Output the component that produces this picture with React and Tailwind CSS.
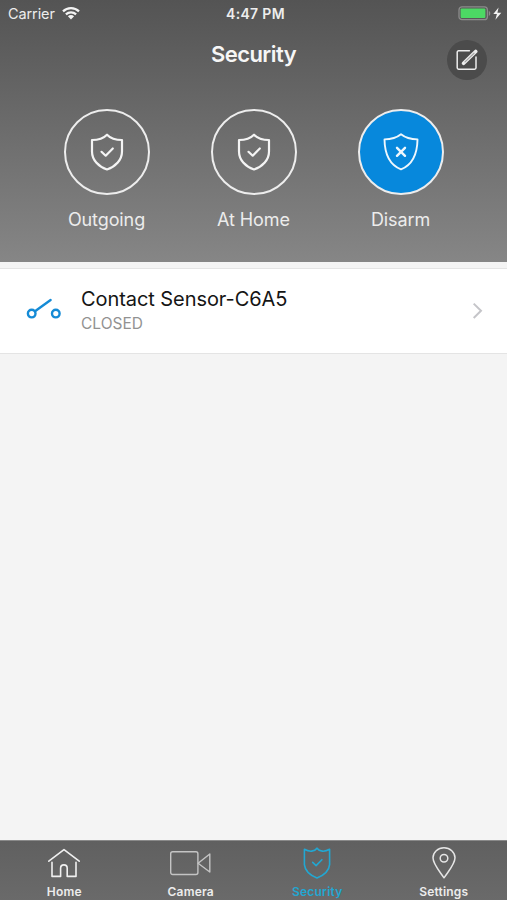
const modes = [
  { id: 'outgoing', label: 'Outgoing', mark: 'check' },
  { id: 'home', label: 'At Home', mark: 'check' },
  { id: 'disarm', label: 'Disarm', mark: 'cross', active: true },
]

const tabs = [
  { id: 'home', label: 'Home', icon: HomeIcon },
  { id: 'camera', label: 'Camera', icon: CameraIcon },
  { id: 'security', label: 'Security', icon: SecurityIcon, active: true },
  { id: 'settings', label: 'Settings', icon: PinIcon },
]

function WifiIcon() {
  return (
    <svg width="18" height="13" viewBox="0 0 18 13" fill="none" stroke="#f4f4f4" strokeWidth="2.2">
      <path d="M1 4.4C5.4 0 12.6 0 17 4.4" />
      <path d="M3.9 7.4C6.8 4.6 11.2 4.6 14.1 7.4" />
      <path d="M9 12.4 5.9 9.3Q9 6.8 12.1 9.3Z" fill="#f4f4f4" stroke="none" />
    </svg>
  )
}

function BatteryIcon() {
  return (
    <svg width="44" height="16" viewBox="0 0 44 16">
      <rect x="1" y=".9" width="28.4" height="12.8" rx="3" fill="none" stroke="#8c8c8c" strokeWidth="1.3" />
      <rect x="2.6" y="2.5" width="24.8" height="9.6" rx="1" fill="#4cd964" />
      <path d="M30.8 5.1c2 .6 2 4.2 0 4.8Z" fill="#8c8c8c" />
      <path d="M40.6 1.5 35.3 8h3.6l-1.5 5.8 5.9-7h-3.9Z" fill="#f4f4f4" />
    </svg>
  )
}

function EditIcon() {
  return (
    <svg width="22" height="22" viewBox="0 0 22 22" fill="none" stroke="#ededed" strokeLinecap="round" strokeLinejoin="round">
      <path d="M13.4 1.8H2.6a1.4 1.4 0 0 0-1.4 1.4v15.6a1.4 1.4 0 0 0 1.4 1.4h16a1.4 1.4 0 0 0 1.4-1.4V8" strokeWidth="1.5" />
      <path d="M7.6 14.3 19.7 2.5" strokeWidth="3.6" />
      <path d="M9 12.9 18 4.2" stroke="#a4a4a4" strokeWidth="1.2" />
    </svg>
  )
}

function ModeShield({ mark }) {
  if (mark === 'cross') {
    return (
      <svg width="36" height="38" viewBox="0 0 36 38" fill="none" stroke="#eef7fd" strokeWidth="1.9" strokeLinecap="round" strokeLinejoin="round">
        <path d="M18 1.3C14 4.5 7.5 6.3 1.5 6.4 1.7 19 6 31.5 18 36.3 30 31.5 34.3 19 34.5 6.4 28.5 6.3 22 4.5 18 1.3Z" />
        <path d="m14 14.8 8 8m0-8-8 8" strokeWidth="2.4" />
      </svg>
    )
  }
  return (
    <svg width="36" height="38" viewBox="0 0 36 38" fill="none" stroke="#f4f4f4" strokeWidth="2.2" strokeLinecap="round" strokeLinejoin="round">
      <path d="M18 1.7C14.5 5.3 9 7 3 7v11.5C3 27 9.3 33.5 18 36.5 26.7 33.5 33 27 33 18.5V7C27 7 21.5 5.3 18 1.7Z" />
      <path d="m12.5 18.8 4.2 3.9 7.1-7.2" />
    </svg>
  )
}

function SensorIcon() {
  return (
    <svg className="mb-1" width="36" height="22" viewBox="0 0 36 22" fill="none" stroke="#158bd6" strokeWidth="2.4" strokeLinecap="round">
      <circle cx="5.7" cy="15.6" r="3.8" />
      <circle cx="29.8" cy="15.6" r="3.8" />
      <path d="M9 13.2 24.6 2" />
    </svg>
  )
}

function HomeIcon() {
  return (
    <svg width="34" height="32" viewBox="0 0 34 32" fill="none" stroke="#f0f0f0" strokeWidth="1.6" strokeLinecap="round" strokeLinejoin="round">
      <path d="M1.8 14.2 17 2.6l15.2 11.6" />
      <path d="M5 15.2v14.2h8.6V21.2a3.3 3.3 0 0 1 6.6 0v8.2H29V15.2" />
    </svg>
  )
}

function CameraIcon() {
  return (
    <svg width="42" height="32" viewBox="0 0 42 32" fill="none" stroke="#c4c4c4" strokeWidth="1.4" strokeLinejoin="round">
      <rect x=".7" y="4.7" width="27.2" height="22.8" rx="2" />
      <path d="M28.1 16.3 39.8 7v18Z" />
    </svg>
  )
}

function SecurityIcon() {
  return (
    <svg width="30" height="32" viewBox="0 0 30 32" fill="none" stroke="#22a7d2" strokeWidth="1.6" strokeLinecap="round" strokeLinejoin="round">
      <path d="M15 1.2C12.6 4.7 7.5 5.2 2.4 2.3v15.3C3 24 8.3 28.3 15 31c6.7-2.7 12-7 12.6-13.4V2.3C22.5 5.2 17.4 4.7 15 1.2Z" />
      <path d="m10.7 15.4 3.4 3.2 5.8-5.9" />
    </svg>
  )
}

function PinIcon() {
  return (
    <svg width="26" height="32" viewBox="0 0 26 32" fill="none" stroke="#e6e6e6" strokeWidth="1.5" strokeLinejoin="round">
      <path d="M13 30.8C8 23.5 2 17 2 10.8a11 10 0 0 1 22 0C24 17 18 23.5 13 30.8Z" />
      <circle cx="13" cy="11.3" r="3.8" />
    </svg>
  )
}

function StatusBar() {
  return (
    <div className="grid grid-cols-3 items-center h-[27px] pl-2 pr-[5px] text-[#ededed]">
      <div className="flex items-center gap-[7px]">
        <span className="text-[14.5px] tracking-[-0.1px]">Carrier</span>
        <WifiIcon />
      </div>
      <div className="text-center text-[14px] font-semibold tracking-[0.3px] pl-px">4:47 PM</div>
      <div className="flex justify-end">
        <BatteryIcon />
      </div>
    </div>
  )
}

function Header() {
  return (
    <header className="h-[262px] shrink-0 bg-linear-to-b from-[#545454] to-[#868686]">
      <StatusBar />

      <div className="grid grid-cols-[1fr_auto_1fr] pt-[13px] h-[82px] px-5">
        <div />
        <h1 className="-mt-px text-[22px] leading-[30px] font-semibold tracking-[-0.55px] text-[#f6f6f6]">Security</h1>
        <button className="justify-self-end w-10 h-10 rounded-full bg-[#4b4b4b] flex items-center justify-center">
          <EditIcon />
        </button>
      </div>

      <div className="flex justify-center gap-[61px]">
        {modes.map(mode => (
          <button key={mode.id} className="w-[86px] flex flex-col items-center">
            <span className={`w-[86px] h-[86px] rounded-full border-2 border-[#ededed] flex items-center justify-center ${mode.active ? 'bg-[#0788dc]' : ''}`}>
              <ModeShield mark={mode.mark} />
            </span>
            <span className="mt-[11px] text-[18px] leading-7 whitespace-nowrap tracking-[-0.1px] text-[#ececec]">{mode.label}</span>
          </button>
        ))}
      </div>
    </header>
  )
}

function SensorRow({ name, status }) {
  return (
    <div className="mt-[6px] h-[86px] flex items-center bg-white border-y border-[#e4e4e4] pl-[26px] pr-[23px]">
      <SensorIcon />
      <div className="ml-[19px] mb-px flex-1">
        <div className="text-[20px] leading-6 tracking-[-0.07px] text-[#151515]">{name}</div>
        <div className="mt-[3px] text-[15.5px] leading-5 text-[#929292]">{status}</div>
      </div>
      <svg width="12" height="18" viewBox="0 0 12 18" fill="none" stroke="#c5c5c9" strokeWidth="2">
        <path d="M1.7 1.6 9 8.8 1.7 16" />
      </svg>
    </div>
  )
}

function TabBar() {
  return (
    <nav className="h-[60px] shrink-0 grid grid-cols-4 border-t border-[#8a8a8a] bg-linear-to-b from-[#606060] to-[#6a6a6a] pl-px">
      {tabs.map(tab => {
        const Icon = tab.icon
        return (
          <button key={tab.id} className="flex flex-col items-center pt-[6px]">
            <Icon />
            <span className={`mt-[5px] text-[12px] leading-4 font-semibold tracking-[0.2px] ${tab.active ? 'text-[#22a7d2]' : 'text-[#ececec]'}`}>
              {tab.label}
            </span>
          </button>
        )
      })}
    </nav>
  )
}

export default function App() {
  return (
    <div className="w-full h-screen flex flex-col overflow-hidden bg-[#f4f4f4] font-['Inter','Liberation_Sans',sans-serif]">
      <Header />
      <main className="flex-1">
        <SensorRow name="Contact Sensor-C6A5" status="CLOSED" />
      </main>
      <TabBar />
    </div>
  )
}
